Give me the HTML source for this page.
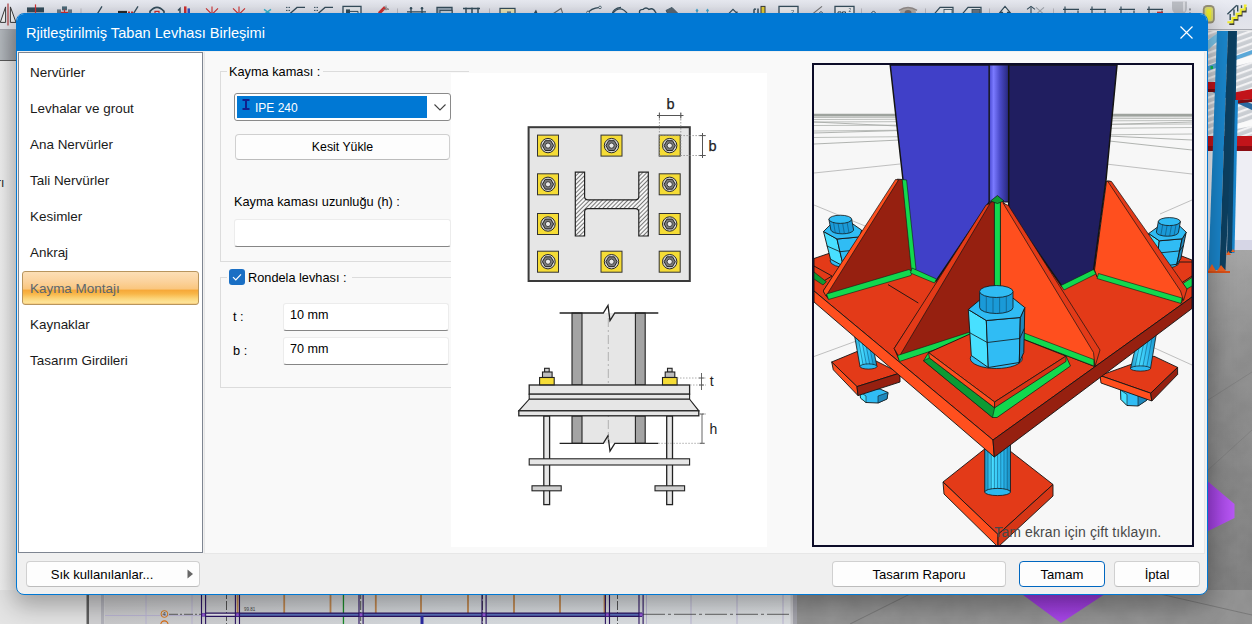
<!DOCTYPE html>
<html lang="tr">
<head>
<meta charset="utf-8">
<title>Rjitleştirilmiş Taban Levhası Birleşimi</title>
<style>
html,body{margin:0;padding:0;}
body{width:1252px;height:624px;overflow:hidden;position:relative;background:#f3f3f3;
  font-family:"Liberation Sans","DejaVu Sans",sans-serif;font-size:12px;color:#000;}
.abs{position:absolute;}
#bg{position:absolute;left:0;top:0;width:1252px;height:624px;}
#dlg{position:absolute;left:16px;top:13px;width:1192px;height:582px;box-sizing:border-box;
  border:1px solid #0078d4;border-radius:8px;background:#f0f0f0;overflow:hidden;
  box-shadow:0 8px 24px 3px rgba(0,0,0,.30);}
#title{position:absolute;left:0;top:0;width:100%;height:37px;background:#0078d4;color:#fff;}
#title span{position:absolute;left:9px;top:10px;font-size:14.6px;line-height:18px;white-space:nowrap;}
#list{position:absolute;left:1px;top:38px;width:185px;height:501px;box-sizing:border-box;background:#fff;border:1px solid #7e8591;}
.li{position:absolute;left:11px;font-size:13.45px;line-height:18px;white-space:nowrap;color:#1a1a1a;}
#sel{position:absolute;left:3px;top:218px;width:177px;height:34px;box-sizing:border-box;border:1px solid #b8955e;border-radius:3px;
  background:linear-gradient(#fcdfb6 0%,#fbd29c 30%,#fac67e 53%,#f6a838 57%,#f8b648 68%,#fcd67c 84%,#fde398 95%,#f6c878 100%);}
#panel{position:absolute;left:188px;top:38px;width:999px;height:502px;background:#f9f9f9;box-shadow:-1px 0 0 #e7e7e7, 1px 0 0 #e7e7e7, inset 0 -1px 0 #e7e7e7;}
.gb{position:absolute;box-sizing:border-box;border:1px solid #dcdcdc;}
.lbl{position:absolute;font-size:12.75px;line-height:16px;white-space:nowrap;background:#f9f9f9;}
.btn{position:absolute;box-sizing:border-box;border:1px solid #d0d0d0;border-bottom-color:#bcbcbc;border-radius:4px;background:#fdfdfd;
  font-size:12.3px;text-align:center;white-space:nowrap;}
.inp{position:absolute;box-sizing:border-box;border:1px solid #ececec;border-bottom:1px solid #868686;border-radius:3px;background:#fff;font-size:12.6px;}
</style>
</head>
<body>
<!--BG--><svg id="bg" width="1252" height="624" viewBox="0 0 1252 624" font-family="Liberation Sans, sans-serif">
<defs>
<linearGradient id="tb" x1="0" x2="0" y1="0" y2="1"><stop offset="0" stop-color="#eaecf3"/><stop offset="0.5" stop-color="#dfe1ea"/><stop offset="1" stop-color="#e4e5eb"/></linearGradient>
<linearGradient id="gband" x1="0" x2="1" y1="0" y2="0"><stop offset="0" stop-color="#b4b9be"/><stop offset="1" stop-color="#979ba1"/></linearGradient>
<linearGradient id="lft" x1="0" x2="1" y1="0" y2="0"><stop offset="0" stop-color="#f0f0f0"/><stop offset="1" stop-color="#e8e8e8"/></linearGradient>
<linearGradient id="cad" x1="0" x2="1" y1="0" y2="0"><stop offset="0" stop-color="#c9c9cb"/><stop offset="0.5" stop-color="#d6dade"/><stop offset="1" stop-color="#dcdfe2"/></linearGradient>
<linearGradient id="floor" x1="0" x2="0" y1="0" y2="1"><stop offset="0" stop-color="#a4a4a4"/><stop offset="0.25" stop-color="#8c8c8c"/><stop offset="0.6" stop-color="#828282"/><stop offset="1" stop-color="#7a7a7a"/></linearGradient>
<linearGradient id="pur" x1="0" x2="1" y1="0" y2="0"><stop offset="0" stop-color="#9636d6"/><stop offset="1" stop-color="#b858f4"/></linearGradient>
<linearGradient id="pur2" x1="0" x2="0" y1="0" y2="1"><stop offset="0" stop-color="#9636d6"/><stop offset="1" stop-color="#a848e8"/></linearGradient>
<filter id="noise" x="0" y="0" width="100%" height="100%"><feTurbulence type="fractalNoise" baseFrequency="0.045" numOctaves="3" seed="4"/><feColorMatrix type="matrix" values="0 0 0 0 0.45  0 0 0 0 0.45  0 0 0 0 0.45  0.9 0 0 -0.25 0"/></filter>
<pattern id="roof" width="6" height="6" patternUnits="userSpaceOnUse" patternTransform="rotate(-20)"><rect width="6" height="6" fill="#c9cdd2"/><rect width="6" height="2.2" fill="#f2f2f4"/></pattern>
</defs>
<rect width="1252" height="624" fill="#f3f3f3"/>
<rect x="0" y="0" width="1252" height="30" fill="url(#tb)"/>
<rect x="0" y="29" width="1252" height="1.2" fill="#a6a8b0"/>
<rect x="0" y="30" width="20" height="30" fill="url(#gband)"/><rect x="0" y="60" width="20" height="1" fill="#5a5a5a"/>
<rect x="0" y="61" width="20" height="540" fill="url(#lft)"/>
<text x="-3" y="187" font-size="12" fill="#222">rı</text>
<g transform="translate(0,1.4)" opacity="0.88"><path d="M0.3 21L5.6 5.5V21ZM16 21L10.4 5.5V21Z" fill="#f4f4f4" stroke="#222" stroke-width="1"/><path d="M8 2V24" stroke="#a01010" stroke-width="1.1"/>
<rect x="27" y="6" width="17" height="5" fill="#1e3a4a"/><path d="M35.5 3V14" stroke="#d01818" stroke-width="1.2"/><path d="M30 12.5H41" stroke="#666" stroke-width="1"/>
<rect x="57" y="8" width="4" height="4" fill="#5a7080"/><rect x="62" y="5" width="5" height="4" fill="#3a5a6a"/><rect x="68" y="8" width="4" height="4" fill="#5a7080"/><path d="M64.5 8V13M61 11H68" stroke="#d01818" stroke-width="1.2"/>
<path d="M81 7V20" stroke="#b8b8c0" stroke-width="1"/>
<path d="M90 12.5H108M97 13L102 5" stroke="#1e3a4a" stroke-width="1.3" fill="none"/>
<rect x="118" y="9.5" width="9" height="3" fill="#111"/><path d="M128 11H134" stroke="#d01818" stroke-width="2" stroke-dasharray="2 1"/><path d="M133 13L138 5" stroke="#1e3a4a" stroke-width="1.3"/>
<path d="M150 13V10Q157 2 164 10V13" stroke="#1e3a4a" stroke-width="1.6" fill="none"/><path d="M155 13V10H159V13" stroke="#d01818" stroke-width="1.2" fill="none"/>
<path d="M180 13V7L178 9" stroke="#1e3a4a" stroke-width="1.4" fill="none"/><rect x="184" y="5" width="2.5" height="8" fill="#d01818"/><rect x="187.5" y="7" width="2.5" height="6" fill="#2040c0"/>
<path d="M212 13V5M206 7L211 12M218 7L213 12" stroke="#d01818" stroke-width="1.1"/>
<path d="M239 13V5M233 7L238 12M245 7L240 12" stroke="#d01818" stroke-width="1.1"/>
<path d="M259 12.5H276" stroke="#1e3a4a" stroke-width="1.3"/><path d="M264 8L271 13M271 8L264 13" stroke="#20b0d0" stroke-width="1.3"/>
<path d="M286 6H291M286 9H290" stroke="#1e3a4a" stroke-width="1" stroke-dasharray="1.5 1"/><path d="M289 13L297 6H305" stroke="#1e3a4a" stroke-width="1.3" fill="none"/>
<path d="M314 6H319M314 9H318" stroke="#1e3a4a" stroke-width="1" stroke-dasharray="1.5 1"/><path d="M317 13L325 6H333" stroke="#1e3a4a" stroke-width="1.3" fill="none"/>
<rect x="343" y="5" width="18" height="10" fill="#e8ecf0" stroke="#1e3a4a" stroke-width="1.3"/><rect x="346" y="8" width="4" height="4" fill="#1e3a4a"/><path d="M350 10H358V13" stroke="#1e3a4a" stroke-width="1" fill="none"/>
<path d="M379 12L385 6" stroke="#d01818" stroke-width="3"/><path d="M384 5L389 8M386 4V9M383 8H389" stroke="#777" stroke-width="0.8"/>
<path d="M397.5 7V20" stroke="#b8b8c0" stroke-width="1"/>
<path d="M407 10.5H426M411 8V13M422 8V13" stroke="#1e3a4a" stroke-width="1.3"/><circle cx="411" cy="7" r="1.3" fill="#1e3a4a"/><circle cx="422" cy="7" r="1.3" fill="#1e3a4a"/>
<rect x="437" y="6" width="15" height="9" fill="#8ea0b0" stroke="#1e3a4a" stroke-width="1.3"/><rect x="440" y="9" width="12" height="6" fill="#c8d4dc" stroke="#1e3a4a" stroke-width="1"/>
<path d="M463 7H480M466 6V13M472 6V13M478 6V13" stroke="#1e3a4a" stroke-width="1.5"/>
<path d="M489.5 7V20" stroke="#b8b8c0" stroke-width="1"/>
<rect x="500" y="7" width="15" height="9" fill="#f0e8b0" stroke="#1e3a4a" stroke-width="1.2"/><rect x="507" y="10" width="4" height="4" fill="#5a7080"/>
<path d="M533 13L536 8L538 13Z" fill="#1e3a4a"/>
<path d="M552 13L561 7L563 13" stroke="#666" stroke-width="1.2" fill="none"/>
<path d="M588 12Q590 7 600 6" stroke="#1e3a4a" stroke-width="1.3" fill="none"/><circle cx="588" cy="11" r="1.3" fill="#fff" stroke="#1e3a4a" stroke-width="0.8"/><circle cx="600" cy="6" r="1.3" fill="#fff" stroke="#1e3a4a" stroke-width="0.8"/>
<path d="M612 13Q613 7 621 6" stroke="#1e3a4a" stroke-width="1.3" fill="none"/>
<path d="M612 13Q620 2 628 13" stroke="#1e3a4a" stroke-width="1.2" fill="none"/>
<path d="M640 13Q638 8 643 8Q646 5 649 8Q653 6 655 10Q657 12 655 13" stroke="#1e3a4a" stroke-width="1.4" fill="none"/>
<path d="M666 9L672 6L678 12L676 13H668Z" fill="#4a5a66" stroke="#1e3a4a" stroke-width="0.8"/>
<path d="M697 9V13M707.5 9V13" stroke="#1e3a4a" stroke-width="1" stroke-dasharray="1.2 1"/><path d="M695.5 9L697 7L698.5 9L697 11ZM706 9L707.5 7L709 9L707.5 11Z" fill="#30a0d0"/>
<path d="M728 13L733 8L738 13M737 10V13" stroke="#1e3a4a" stroke-width="1.2" fill="none"/>
<path d="M754 13V9Q754 7 756 8M758 13V7" stroke="#1e3a4a" stroke-width="1.5" fill="none"/><rect x="761" y="5" width="4" height="8" fill="#e8d020" stroke="#222" stroke-width="1"/>
<rect x="779" y="5" width="19" height="10" fill="#f2f2f4" stroke="#1e3a4a" stroke-width="1.3"/><text x="791" y="12.5" font-size="6" fill="#1e3a4a">2</text>
<path d="M812 13L822 5" stroke="#666" stroke-width="1.2"/><path d="M818 13L821 10L824 13" stroke="#1e3a4a" stroke-width="1" fill="none"/>
<rect x="835" y="5" width="19" height="10" fill="#f2f2f4" stroke="#1e3a4a" stroke-width="1.3"/><path d="M838 13V10.5H841V13M842.5 13V10.5H845.5V13" stroke="#1e3a4a" stroke-width="1" fill="none"/><text x="848.5" y="11" font-size="5" fill="#1e3a4a">2</text>
<path d="M861.5 7V20" stroke="#b8b8c0" stroke-width="1"/>
<path d="M870 13L873.5 9.5L877 13" stroke="#1e3a4a" stroke-width="1" fill="none"/><circle cx="888" cy="12.5" r="0.8" fill="#1e3a4a"/>
<ellipse cx="908" cy="11" rx="8" ry="5" fill="#b0a8a0"/><ellipse cx="908" cy="11.5" rx="3.5" ry="3" fill="#6a6260"/><path d="M899 9Q908 3 917 9" stroke="#8a8280" stroke-width="1.5" fill="none"/>
<path d="M925.5 7V20" stroke="#b8b8c0" stroke-width="1"/>
<path d="M934 13L940 6H953V13" fill="#e8ecf0" stroke="#1e3a4a" stroke-width="1.2"/><rect x="944" y="8" width="8" height="5" fill="#fafafa" stroke="#1e3a4a" stroke-width="0.8"/>
<path d="M962 13L968 6H981V13" fill="#e8ecf0" stroke="#1e3a4a" stroke-width="1.2"/><rect x="972" y="8" width="8" height="5" fill="#5a6a78" stroke="#1e3a4a" stroke-width="0.8"/>
<path d="M989.5 7V20" stroke="#b8b8c0" stroke-width="1"/>
<path d="M1000 11L1005 5L1010 11H1007.5V13H1002.5V11Z" fill="#f4f4f4" stroke="#1e3a4a" stroke-width="1.2"/>
<path d="M1031 13V6M1027 8L1031 5L1035 8" stroke="#1e3a4a" stroke-width="1.1" fill="none"/><path d="M1036 6L1044 13M1044 6L1036 13" stroke="#9aa0a8" stroke-width="1.1"/>
<path d="M1053.5 7V20" stroke="#b8b8c0" stroke-width="1"/>
<path d="M1063 8H1079M1065 5V13M1078 9V13" stroke="#1e3a4a" stroke-width="1.2" fill="none"/><path d="M1068 12H1075" stroke="#5a6a78" stroke-width="1" stroke-dasharray="1.5 1"/>
<path d="M1090 8H1106M1092 5V13M1105 9V13" stroke="#1e3a4a" stroke-width="1.2" fill="none"/><path d="M1095 12H1102" stroke="#5a6a78" stroke-width="1" stroke-dasharray="1.5 1"/>
<path d="M1119 8H1135M1121 5V13M1134 9V13" stroke="#1e3a4a" stroke-width="1.2" fill="none"/><path d="M1124 12H1131" stroke="#5a6a78" stroke-width="1" stroke-dasharray="1.5 1"/>
<path d="M1147 8H1163M1149 5V13M1162 9V13" stroke="#1e3a4a" stroke-width="1.2" fill="none"/><path d="M1152 12H1159" stroke="#5a6a78" stroke-width="1" stroke-dasharray="1.5 1"/>
<path d="M1157 11.5H1163" stroke="#d01818" stroke-width="2.5"/>
<path d="M1172 0H1187V6Q1187 10 1184 12H1175Q1172 10 1172 6Z" fill="#b9bcc2"/><path d="M1184 0V10" stroke="#e8e8ec" stroke-width="1.5"/>
<rect x="1189" y="7" width="2" height="2" fill="#8a8e96"/><rect x="1189" y="11" width="2" height="2" fill="#8a8e96"/>
<rect x="1202.8" y="3.6" width="12" height="18.6" rx="4.5" fill="#8a8468"/><rect x="1204.6" y="5.6" width="8.4" height="14.6" rx="2.5" fill="#d6d660"/><rect x="1206.4" y="7.5" width="4.8" height="11" rx="2" fill="#ecec14"/>
<path d="M1228.4 21.8H1232.5V17.6H1236.6V13.4H1240.7V9.2H1244.8V5" stroke="#2a2a20" stroke-width="1.8" fill="none" transform="translate(0.9,0.9)"/><path d="M1227.4 20.8H1232.5V16.6H1236.6V12.4H1240.7V8.2H1244.8V4.2H1246.6" stroke="#f2ee14" stroke-width="2" fill="none"/><path d="M1227.4 12.8L1236.8 3.8M1230.2 12.6V18.5M1234 8V14M1237.7 3.8V10M1241.5 3.8V6.5" stroke="#1e3a48" stroke-width="1.4" fill="none"/></g>
<g><rect x="1196" y="31" width="56" height="120" fill="url(#roof)"/><rect x="1196" y="150" width="56" height="92" fill="#eeeef4"/><rect x="1196" y="240" width="56" height="11" fill="#d6d6e6"/><rect x="1196" y="250" width="56" height="374" fill="url(#floor)"/><rect x="1196" y="250" width="56" height="374" filter="url(#noise)" opacity="0.3"/><path d="M1208 40L1218 33L1222 37L1208 50Z" fill="#7cc6ea"/><path d="M1208 66L1252 50V54L1208 71Z" fill="#5aa8d8"/><path d="M1208 84L1252 104V110L1208 90Z" fill="#2a6aa0"/><path d="M1236 60L1252 55V62L1236 66Z" fill="#fafafa"/><path d="M1236 124L1252 120V126L1236 129Z" fill="#fafafa"/><path d="M1208 82H1222V89H1208ZM1232 93L1252 89V99L1232 101Z" fill="#c2141a"/><path d="M1208 89H1222V92H1208ZM1232 101L1252 99V102L1232 104Z" fill="#7a0a10"/><path d="M1208 136H1252V149H1208Z" fill="#c2141a"/><path d="M1208 146H1252V151H1208Z" fill="#8a0c12"/><path d="M1231 31H1237L1233 253H1227Z" fill="#0c4468"/><path d="M1235 100H1238L1234.5 253H1232Z" fill="#1a86cc"/><path d="M1217 31H1228L1219.5 270H1208.5Z" fill="#1a86cc"/><path d="M1228 31H1236L1225.5 270H1219.5Z" fill="#0c3f60"/><path d="M1208 271L1212 264L1216 271ZM1217 271L1221 265L1226 271Z" fill="#f06020"/><path d="M1208 271H1230V273H1208Z" fill="#d85018"/><path d="M1226 255L1228.5 251L1231 255ZM1231 252L1233 249L1235 252Z" fill="#f06020"/><rect x="1210.5" y="66" width="2.5" height="3" fill="#10c050"/><path d="M1200 474.7L1234.5 504V518L1200 535Z" fill="url(#pur)"/><path d="M1208 400L1252 372M1208 470L1252 430" stroke="#666" stroke-width="0.6" opacity="0.5" fill="none"/></g>
<g><rect x="0" y="590" width="90" height="34" fill="#e4e4e4"/><rect x="86.5" y="590" width="2.5" height="34" fill="#5e5e5e"/><rect x="89" y="590" width="12" height="34" fill="#d0d0d2"/><rect x="101" y="590" width="3.5" height="34" fill="#b2b2ba"/><rect x="104.5" y="590" width="689" height="34" fill="url(#cad)"/><path d="M146 590V624M192 590V624M646.5 590V624M691 590V624M737 590V624M783 590V624M105 615.5H200" stroke="#b9b4d2" stroke-width="1" fill="none"/><path d="M169 614.3H201" stroke="#444" stroke-width="0.8" stroke-dasharray="9 2 2 2"/><path d="M643 614.3H789" stroke="#444" stroke-width="0.8" stroke-dasharray="22 3 3 3"/><path d="M226.5 590V624M360.7 590V624M482.5 590V624M617.5 590V624" stroke="#333" stroke-width="0.8" stroke-dasharray="9 2"/><rect x="236.7" y="590" width="1.8" height="23" fill="#c08850"/><rect x="283.3" y="590" width="1.8" height="23" fill="#c08850"/><rect x="329.6" y="590" width="1.8" height="23" fill="#c08850"/><rect x="374.90000000000003" y="590" width="1.8" height="23" fill="#c08850"/><rect x="420.1" y="590" width="1.8" height="23" fill="#c08850"/><rect x="467.1" y="590" width="1.8" height="23" fill="#c08850"/><rect x="513.1" y="590" width="1.8" height="23" fill="#c08850"/><rect x="559.1" y="590" width="1.8" height="23" fill="#c08850"/><rect x="603.6" y="590" width="1.8" height="23" fill="#c08850"/><rect x="342.8" y="590" width="1.3" height="34" fill="#1a8a2a"/><rect x="239.5" y="613" width="402" height="3.4" fill="#5a70ba"/><rect x="205" y="613" width="30" height="3.4" fill="#e8e8ee"/><path d="M205 613.2H642M205 616.4H642" stroke="#2a1262" stroke-width="1.2"/><path d="M201.5 595V624M205.6 595V624" stroke="#2a1262" stroke-width="1.1"/><path d="M235.4 595V624M239.5 595V624" stroke="#2a1262" stroke-width="1.1"/><path d="M359 595V624M363.1 595V624" stroke="#2a1262" stroke-width="1.1"/><path d="M482 595V624M486.1 595V624" stroke="#2a1262" stroke-width="1.1"/><path d="M605.4 595V624M609.5 595V624" stroke="#2a1262" stroke-width="1.1"/><path d="M639 595V624M643.1 595V624" stroke="#2a1262" stroke-width="1.1"/><rect x="420.5" y="616" width="3" height="8" fill="#2a2aa0"/><rect x="202.0" y="613.2" width="3" height="3" fill="#9a5ad8" stroke="#4a2a90" stroke-width="0.5"/><rect x="236.0" y="613.2" width="3" height="3" fill="#9a5ad8" stroke="#4a2a90" stroke-width="0.5"/><rect x="359.5" y="613.2" width="3" height="3" fill="#9a5ad8" stroke="#4a2a90" stroke-width="0.5"/><rect x="482.5" y="613.2" width="3" height="3" fill="#9a5ad8" stroke="#4a2a90" stroke-width="0.5"/><rect x="605.9" y="613.2" width="3" height="3" fill="#9a5ad8" stroke="#4a2a90" stroke-width="0.5"/><rect x="639.5" y="613.2" width="3" height="3" fill="#9a5ad8" stroke="#4a2a90" stroke-width="0.5"/><circle cx="164.4" cy="614" r="3.4" fill="none" stroke="#d8700a" stroke-width="0.9"/><text x="162.6" y="616.3" font-size="6" fill="#444">4</text><circle cx="164.4" cy="624.5" r="3.6" fill="none" stroke="#d86a10" stroke-width="1.1"/><text x="244" y="611" font-size="4.5" fill="#444">99.81</text><rect x="793" y="590" width="4" height="34" fill="#a4a4ac"/><rect x="790.5" y="590" width="2.5" height="34" fill="#c8c8cc"/><rect x="797" y="590" width="455" height="34" fill="#8e8e8e"/><rect x="797" y="590" width="455" height="34" filter="url(#noise)" opacity="0.35"/><path d="M850 624L910 594M1160 594L1252 615" stroke="#555" stroke-width="0.7" opacity="0.6" fill="none"/><path d="M1019 592H1108L1061 623Z" fill="url(#pur2)"/></g>
</svg><!--/BG-->

<div id="dlg">
  <div id="title"><span>Rjitleştirilmiş Taban Levhası Birleşimi</span>
    <svg class="abs" style="left:1163px;top:12px" width="13" height="13" viewBox="0 0 13 13"><path d="M0.5 0.5L12.5 12.5M12.5 0.5L0.5 12.5" stroke="#fff" stroke-width="1.2" fill="none"/></svg>
  </div>
  <div id="list">
    <div id="sel"></div>
    <div class="li" style="top:11px">Nervürler</div>
    <div class="li" style="top:47px">Levhalar ve grout</div>
    <div class="li" style="top:83px">Ana Nervürler</div>
    <div class="li" style="top:119px">Tali Nervürler</div>
    <div class="li" style="top:155px">Kesimler</div>
    <div class="li" style="top:191px">Ankraj</div>
    <div class="li" style="top:227px;color:#5a666e">Kayma Montajı</div>
    <div class="li" style="top:263px">Kaynaklar</div>
    <div class="li" style="top:299px">Tasarım Girdileri</div>
  </div>
  <div id="panel">
    <!-- groupbox 1 : x 220..,y 72..  panel origin = (205,52) -->
    <div class="gb" style="left:15px;top:19px;width:249px;height:191px;border-right:none"></div>
    <div class="lbl" style="left:22px;top:12px;padding:0 3px 0 2px">Kayma kaması :</div>
    <div class="abs" id="combo" style="left:29px;top:41px;width:217px;height:28px;box-sizing:border-box;border:1px solid #8a8a8a;border-radius:3px;background:#fff">
      <div class="abs" style="left:2px;top:2px;width:190px;height:22px;background:#0078d4"></div>
      <svg class="abs" style="left:7px;top:5px" width="8" height="12" viewBox="0 0 8 12"><path d="M0.5 1H7.5M0.5 10H7.5M4 1V10" stroke="#10208c" stroke-width="2" fill="none"/></svg>
      <div class="abs" style="left:20px;top:7px;font-size:12px;line-height:14px;color:#fff">IPE 240</div>
      <svg class="abs" style="left:198px;top:9px" width="14" height="9" viewBox="0 0 14 9"><path d="M1.5 1.5L7 7L12.5 1.5" stroke="#444" stroke-width="1.1" fill="none"/></svg>
    </div>
    <div class="btn" style="left:30px;top:82px;width:215px;height:26px;line-height:25.5px">Kesit Yükle</div>
    <div class="lbl" style="left:29px;top:142px;background:none">Kayma kaması uzunluğu (h) :</div>
    <div class="inp" style="left:29px;top:167px;width:217px;height:28px"></div>

    <div class="gb" style="left:15px;top:225px;width:260px;height:111px;border-right:none"></div>
    <div class="abs" style="left:22px;top:216px;width:125px;height:18px;background:#f9f9f9"></div>
    <div class="abs" style="left:24px;top:217px;width:16px;height:16px;box-sizing:border-box;border-radius:3px;background:#1a6fc4">
      <svg width="16" height="16" viewBox="0 0 16 16"><path d="M4 8.2L6.8 11L12 5.3" stroke="#fff" stroke-width="1.2" fill="none"/></svg>
    </div>
    <div class="lbl" style="left:43px;top:218px">Rondela levhası :</div>
    <div class="lbl" style="left:28px;top:257px;background:none">t :</div>
    <div class="inp" style="left:78px;top:251px;width:166px;height:28px"><span class="abs" style="left:6px;top:4px;line-height:14px">10 mm</span></div>
    <div class="lbl" style="left:28px;top:291px;background:none">b :</div>
    <div class="inp" style="left:78px;top:285px;width:166px;height:28px"><span class="abs" style="left:6px;top:4px;line-height:14px">70 mm</span></div>

    <div class="abs" id="img" style="left:246px;top:21px;width:316px;height:474px;background:#fff"><svg class="abs" style="left:0;top:0" width="316" height="474" viewBox="451 73 316 474" font-family="Liberation Sans, sans-serif">
<defs><pattern id="hat" width="3" height="3" patternUnits="userSpaceOnUse" patternTransform="rotate(45)"><rect width="3" height="3" fill="#f6f6f6"/><rect width="1" height="3" fill="#777"/></pattern></defs>
<!-- top view -->
<rect x="528.6" y="127.2" width="161.2" height="153.8" fill="#e6e6e6" stroke="#3a3a3a" stroke-width="2"/>
<path d="M575.3 172.2H584.6V196.5Q584.6 199.8 588 199.8H635.4Q638.8 199.8 638.8 196.5V172.2H648.3V236H638.8V212Q638.8 208.6 635.4 208.6H588Q584.6 208.6 584.6 212V236H575.3Z" fill="url(#hat)" stroke="#222" stroke-width="1.2"/>
<g transform="translate(548 145.6)"><rect x="-10.5" y="-10.5" width="21" height="21" fill="#f5dc36" stroke="#333" stroke-width="1"/><circle r="7.2" fill="#d4d4d4" stroke="#2a2a2a" stroke-width="1"/><path d="M-5.6 0L-2.8 -4.9L2.8 -4.9L5.6 0L2.8 4.9L-2.8 4.9Z" fill="#7c7c7c" stroke="#1a1a1a" stroke-width="0.9"/><circle r="2.6" fill="#e8e8e8" stroke="#222" stroke-width="0.8"/></g><g transform="translate(611.5 145.6)"><rect x="-10.5" y="-10.5" width="21" height="21" fill="#f5dc36" stroke="#333" stroke-width="1"/><circle r="7.2" fill="#d4d4d4" stroke="#2a2a2a" stroke-width="1"/><path d="M-5.6 0L-2.8 -4.9L2.8 -4.9L5.6 0L2.8 4.9L-2.8 4.9Z" fill="#7c7c7c" stroke="#1a1a1a" stroke-width="0.9"/><circle r="2.6" fill="#e8e8e8" stroke="#222" stroke-width="0.8"/></g><g transform="translate(669.7 145.6)"><rect x="-10.5" y="-10.5" width="21" height="21" fill="#f5dc36" stroke="#333" stroke-width="1"/><circle r="7.2" fill="#d4d4d4" stroke="#2a2a2a" stroke-width="1"/><path d="M-5.6 0L-2.8 -4.9L2.8 -4.9L5.6 0L2.8 4.9L-2.8 4.9Z" fill="#7c7c7c" stroke="#1a1a1a" stroke-width="0.9"/><circle r="2.6" fill="#e8e8e8" stroke="#222" stroke-width="0.8"/></g><g transform="translate(548 184.3)"><rect x="-10.5" y="-10.5" width="21" height="21" fill="#f5dc36" stroke="#333" stroke-width="1"/><circle r="7.2" fill="#d4d4d4" stroke="#2a2a2a" stroke-width="1"/><path d="M-5.6 0L-2.8 -4.9L2.8 -4.9L5.6 0L2.8 4.9L-2.8 4.9Z" fill="#7c7c7c" stroke="#1a1a1a" stroke-width="0.9"/><circle r="2.6" fill="#e8e8e8" stroke="#222" stroke-width="0.8"/></g><g transform="translate(669.7 184.3)"><rect x="-10.5" y="-10.5" width="21" height="21" fill="#f5dc36" stroke="#333" stroke-width="1"/><circle r="7.2" fill="#d4d4d4" stroke="#2a2a2a" stroke-width="1"/><path d="M-5.6 0L-2.8 -4.9L2.8 -4.9L5.6 0L2.8 4.9L-2.8 4.9Z" fill="#7c7c7c" stroke="#1a1a1a" stroke-width="0.9"/><circle r="2.6" fill="#e8e8e8" stroke="#222" stroke-width="0.8"/></g><g transform="translate(548 224)"><rect x="-10.5" y="-10.5" width="21" height="21" fill="#f5dc36" stroke="#333" stroke-width="1"/><circle r="7.2" fill="#d4d4d4" stroke="#2a2a2a" stroke-width="1"/><path d="M-5.6 0L-2.8 -4.9L2.8 -4.9L5.6 0L2.8 4.9L-2.8 4.9Z" fill="#7c7c7c" stroke="#1a1a1a" stroke-width="0.9"/><circle r="2.6" fill="#e8e8e8" stroke="#222" stroke-width="0.8"/></g><g transform="translate(669.7 224)"><rect x="-10.5" y="-10.5" width="21" height="21" fill="#f5dc36" stroke="#333" stroke-width="1"/><circle r="7.2" fill="#d4d4d4" stroke="#2a2a2a" stroke-width="1"/><path d="M-5.6 0L-2.8 -4.9L2.8 -4.9L5.6 0L2.8 4.9L-2.8 4.9Z" fill="#7c7c7c" stroke="#1a1a1a" stroke-width="0.9"/><circle r="2.6" fill="#e8e8e8" stroke="#222" stroke-width="0.8"/></g><g transform="translate(548 261.7)"><rect x="-10.5" y="-10.5" width="21" height="21" fill="#f5dc36" stroke="#333" stroke-width="1"/><circle r="7.2" fill="#d4d4d4" stroke="#2a2a2a" stroke-width="1"/><path d="M-5.6 0L-2.8 -4.9L2.8 -4.9L5.6 0L2.8 4.9L-2.8 4.9Z" fill="#7c7c7c" stroke="#1a1a1a" stroke-width="0.9"/><circle r="2.6" fill="#e8e8e8" stroke="#222" stroke-width="0.8"/></g><g transform="translate(611.5 261.7)"><rect x="-10.5" y="-10.5" width="21" height="21" fill="#f5dc36" stroke="#333" stroke-width="1"/><circle r="7.2" fill="#d4d4d4" stroke="#2a2a2a" stroke-width="1"/><path d="M-5.6 0L-2.8 -4.9L2.8 -4.9L5.6 0L2.8 4.9L-2.8 4.9Z" fill="#7c7c7c" stroke="#1a1a1a" stroke-width="0.9"/><circle r="2.6" fill="#e8e8e8" stroke="#222" stroke-width="0.8"/></g><g transform="translate(669.7 261.7)"><rect x="-10.5" y="-10.5" width="21" height="21" fill="#f5dc36" stroke="#333" stroke-width="1"/><circle r="7.2" fill="#d4d4d4" stroke="#2a2a2a" stroke-width="1"/><path d="M-5.6 0L-2.8 -4.9L2.8 -4.9L5.6 0L2.8 4.9L-2.8 4.9Z" fill="#7c7c7c" stroke="#1a1a1a" stroke-width="0.9"/><circle r="2.6" fill="#e8e8e8" stroke="#222" stroke-width="0.8"/></g>
<g stroke="#888" stroke-width="0.8" stroke-dasharray="1.5 1.5" fill="none"><path d="M659.4 113V156M680.8 113V156M659.4 135.6H706M659.4 155.5H706"/></g>
<g stroke="#555" stroke-width="1" fill="none"><path d="M657 115.5H683.5M659.4 112.5V118.5M680.8 112.5V118.5M702.5 133V158M699.5 135.6H705.5M699.5 155.5H705.5"/></g>
<text x="670.5" y="109" font-size="14.5" text-anchor="middle" fill="#222" stroke="#222" stroke-width="0.25">b</text>
<text x="712.5" y="150.5" font-size="14.5" text-anchor="middle" fill="#222" stroke="#222" stroke-width="0.25">b</text>
<!-- side view -->
<g stroke="#222" stroke-width="1.1">
<rect x="572" y="313" width="73" height="72" fill="#e6e6e6" stroke="none"/>
<rect x="572" y="416" width="73" height="27.3" fill="#e6e6e6" stroke="none"/>
<rect x="572" y="313" width="10" height="72" fill="#a4a4a4"/><rect x="635.4" y="313" width="9.8" height="72" fill="#a4a4a4"/>
<rect x="572" y="416" width="10" height="27.3" fill="#a4a4a4"/><rect x="635.4" y="416" width="9.8" height="27.3" fill="#a4a4a4"/>
<path d="M559.6 313H603.3L608 305.3L610 320.7L614.8 313H658.3M559.6 443.3H603.3L608 435.6L610 451L614.8 443.3H658.3" fill="none" stroke-width="1.3"/>
<path d="M608.3 318V440" stroke="#aaa" stroke-width="0.9" stroke-dasharray="9 3 2 3" fill="none"/>
<rect x="543.8" y="416" width="5.8" height="88.6" fill="#e6e6e6" stroke-width="1.3"/><rect x="666.7" y="416" width="5.8" height="88.6" fill="#e6e6e6" stroke-width="1.3"/>
<rect x="529.2" y="385" width="160.4" height="9.2" fill="#e6e6e6" stroke-width="1.3"/>
<rect x="529.2" y="394.2" width="160.4" height="5" fill="#e6e6e6"/>
<path d="M529.2 399.2H689.6L698.8 410.8H518.8Z" fill="#e6e6e6"/>
<rect x="518.8" y="410.8" width="180" height="5" fill="#e6e6e6" stroke-width="1.3"/>
<rect x="529.2" y="458.8" width="160.4" height="6.2" fill="#e6e6e6"/>
<rect x="532" y="485.8" width="29.2" height="5" fill="#cfcfcf"/><rect x="655" y="485.8" width="29.6" height="5" fill="#cfcfcf"/>
<rect x="544.6" y="368.3" width="4.6" height="4" fill="#cfcfcf"/><rect x="542.5" y="372" width="9.6" height="5.5" fill="#bdbdbd"/><rect x="539.6" y="377.5" width="14.6" height="7.3" fill="#f5dc36"/>
<rect x="667.5" y="368.3" width="4.6" height="4" fill="#cfcfcf"/><rect x="665.2" y="372" width="9.6" height="5.5" fill="#bdbdbd"/><rect x="662.5" y="377.5" width="14.6" height="7.3" fill="#f5dc36"/>
</g>
<g stroke="#999" stroke-width="0.8" stroke-dasharray="1.5 1.5" fill="none"><path d="M677 378H706M690 385H706M699 414H706M658.3 443.3H706"/></g>
<g stroke="#555" stroke-width="0.9" fill="none"><path d="M701.5 373V390M699 378H704M699 385H704M702 414V443.3M699.5 414H704.5M699.5 443.3H704.5"/></g>
<text x="711.7" y="385.5" font-size="14" text-anchor="middle" fill="#222">t</text>
<text x="713.5" y="433.5" font-size="14" text-anchor="middle" fill="#222">h</text>
</svg></div>
    <div class="abs" id="view" style="left:607px;top:11px;width:382px;height:484px;box-sizing:border-box;border:2px solid #0c0c28;background:#f6f6f6;overflow:hidden"><!--VIEW--><svg class="abs" style="left:0;top:0" width="378" height="480" viewBox="814 65 378 480" font-family="Liberation Sans, sans-serif" stroke-linejoin="round">
<defs>
<linearGradient id="fil" x1="0" x2="1" y1="0" y2="0"><stop offset="0" stop-color="#4848d0"/><stop offset="0.22" stop-color="#7a7aff"/><stop offset="0.55" stop-color="#4a4ac8"/><stop offset="1" stop-color="#26267a"/></linearGradient>
<linearGradient id="rod" x1="0" x2="1" y1="0" y2="0"><stop offset="0" stop-color="#1a8ec0"/><stop offset="0.3" stop-color="#48dcff"/><stop offset="0.7" stop-color="#2cb8ee"/><stop offset="1" stop-color="#1a8ec0"/></linearGradient>
</defs>
<rect x="814" y="65" width="378" height="480" fill="#f7f7f7"/>
<!-- floor grid -->
<g stroke="#a8aca8" stroke-width="0.9" fill="none">
<path d="M814 114.5H1192M814 115.8H1192" stroke="#9ea39e" stroke-width="1.4"/>
<path d="M814 117.5L1192 116.8M814 119.5L1192 118.4M814 122L1192 120.5M814 125.5L1192 124M814 131L1192 127.5M814 137.5L1192 134" stroke="#b4b8b4"/>
<path d="M814 122L1192 140M1192 122L814 133M814 144L900 140M1100 140L1192 150"/>
<path d="M814 173L900 164M1106 164L1192 174M814 205L870 228M1192 200L1160 214M814 356.5L855 341.5M1192 365L1142.8 342.7" stroke="#b8b8b8"/>
</g>
<polygon points="860.0,392.0 868.0,388.5 880.0,389.0 888.0,392.5 887.0,399.0 878.0,403.0 866.0,402.5 860.5,398.0" fill="#30bcf4" stroke="#141414" stroke-width="0.9" />
<polygon points="860.0,392.0 866.0,396.0 866.0,402.5 860.5,398.0" fill="#48e0ff" stroke="#141414" stroke-width="0.6" />
<polygon points="878.0,396.0 888.0,392.5 887.0,399.0 878.0,403.0" fill="#1f88bc" stroke="#141414" stroke-width="0.6" />
<polygon points="831.7,362.0 857.0,351.5 900.0,373.0 857.0,386.6" fill="#e33a18" stroke="#141414" stroke-width="0.9" />
<polygon points="831.7,362.0 857.0,386.6 858.0,395.6 833.3,369.8" fill="#ff4f1e" stroke="#141414" stroke-width="0.9" />
<polygon points="857.0,386.6 900.0,373.0 900.0,382.0 858.0,395.6" fill="#962010" stroke="#141414" stroke-width="0.9" />
<polygon points="853.5,330 869.5,330 877,366.5 860,366.5" fill="url(#rod)" stroke="#141414" stroke-width="0.8"/>
<line x1="856.7" y1="330" x2="863.4" y2="366.5" stroke="#0e5a80" stroke-width="0.6"/>
<line x1="859.9" y1="330" x2="866.8" y2="366.5" stroke="#0e5a80" stroke-width="0.6"/>
<line x1="863.1" y1="330" x2="870.2" y2="366.5" stroke="#0e5a80" stroke-width="0.6"/>
<line x1="866.3" y1="330" x2="873.6" y2="366.5" stroke="#0e5a80" stroke-width="0.6"/>
<ellipse cx="868.5" cy="366.5" rx="8.5" ry="2.6" fill="#2cb8ee" stroke="#141414" stroke-width="0.7"/>
<polygon points="1120.5,390.0 1128.0,386.5 1140.0,387.0 1147.5,391.0 1147.0,400.0 1138.0,406.0 1127.0,405.5 1121.0,399.5" fill="#30bcf4" stroke="#141414" stroke-width="0.9" />
<polygon points="1120.5,390.0 1127.0,394.5 1127.0,405.5 1121.0,399.5" fill="#48e0ff" stroke="#141414" stroke-width="0.6" />
<polygon points="1138.0,395.0 1147.5,391.0 1147.0,400.0 1138.0,406.0" fill="#1f88bc" stroke="#141414" stroke-width="0.6" />
<polygon points="1100.0,375.5 1154.0,356.2 1177.6,367.4 1150.7,393.2" fill="#e33a18" stroke="#141414" stroke-width="0.9" />
<polygon points="1100.0,375.5 1150.7,393.2 1151.8,401.0 1101.0,383.0" fill="#ff4f1e" stroke="#141414" stroke-width="0.9" />
<polygon points="1150.7,393.2 1177.6,367.4 1177.6,374.5 1151.8,401.0" fill="#962010" stroke="#141414" stroke-width="0.9" />
<polygon points="1139.5,330 1157,330 1150.5,368.5 1130.5,368.5" fill="url(#rod)" stroke="#141414" stroke-width="0.8"/>
<line x1="1143.0" y1="330" x2="1134.5" y2="368.5" stroke="#0e5a80" stroke-width="0.6"/>
<line x1="1146.5" y1="330" x2="1138.5" y2="368.5" stroke="#0e5a80" stroke-width="0.6"/>
<line x1="1150.0" y1="330" x2="1142.5" y2="368.5" stroke="#0e5a80" stroke-width="0.6"/>
<line x1="1153.5" y1="330" x2="1146.5" y2="368.5" stroke="#0e5a80" stroke-width="0.6"/>
<ellipse cx="1140.5" cy="368.5" rx="10.0" ry="2.6" fill="#2cb8ee" stroke="#141414" stroke-width="0.7"/>
<polygon points="943.0,482.0 996.0,440.0 1053.0,484.5 998.0,534.5" fill="#e33a18" stroke="#141414" stroke-width="0.9" />
<polygon points="943.0,482.0 998.0,534.5 998.0,547.0 944.0,494.0" fill="#ff4f1e" stroke="#141414" stroke-width="0.9" />
<polygon points="998.0,534.5 1053.0,484.5 1053.0,496.0 998.0,547.0" fill="#d63616" stroke="#141414" stroke-width="0.9" />
<polygon points="984.7,440 1010.5,440 1010.5,492 984.7,492" fill="url(#rod)" stroke="#141414" stroke-width="0.8"/>
<line x1="987.9" y1="440" x2="987.9" y2="492" stroke="#0e5a80" stroke-width="0.6"/>
<line x1="991.2" y1="440" x2="991.2" y2="492" stroke="#0e5a80" stroke-width="0.6"/>
<line x1="994.4" y1="440" x2="994.4" y2="492" stroke="#0e5a80" stroke-width="0.6"/>
<line x1="997.6" y1="440" x2="997.6" y2="492" stroke="#0e5a80" stroke-width="0.6"/>
<line x1="1000.8" y1="440" x2="1000.8" y2="492" stroke="#0e5a80" stroke-width="0.6"/>
<line x1="1004.0" y1="440" x2="1004.0" y2="492" stroke="#0e5a80" stroke-width="0.6"/>
<line x1="1007.3" y1="440" x2="1007.3" y2="492" stroke="#0e5a80" stroke-width="0.6"/>
<ellipse cx="997.6" cy="492" rx="12.9" ry="3.6" fill="#2cb8ee" stroke="#141414" stroke-width="0.8"/>
<polygon points="814.0,258.5 880.0,236.0 1130.0,236.0 1192.0,260.0 1192.0,297.0 993.0,440.0 814.0,291.0" fill="#e33a18" stroke="#141414" stroke-width="0.9" />
<polygon points="814.0,291.0 993.0,440.0 994.3,457.0 814.0,302.0" fill="#ff4f1e" stroke="#141414" stroke-width="0.9" />
<polygon points="993.0,440.0 1192.0,297.0 1192.0,308.5 994.3,457.0" fill="#962010" stroke="#141414" stroke-width="0.9" />
<polyline points="888.0,284.6 918.3,303.0" fill="none" stroke="#141414" stroke-width="0.9"/>
<polygon points="890.2,65.0 989.3,65.0 989.3,202.0 936.0,281.0 912.5,270.0 903.0,180.0" fill="#4040c8" stroke="#141414" stroke-width="1.5" />
<rect x="989.3" y="65" width="19.4" height="137" fill="url(#fil)" stroke="#141414" stroke-width="1"/>
<polygon points="1008.7,65.0 1117.0,65.0 1106.0,180.0 1093.5,270.5 1062.0,286.5 1008.7,210.0" fill="#201e60" stroke="#141414" stroke-width="1.5" />
<polygon points="814.0,266.0 832.0,276.0 822.0,282.0 814.0,278.0" fill="#e33a18" stroke="#141414" stroke-width="0.9" />
<polygon points="814.0,272.0 826.4,281.7 823.0,285.0 814.0,279.0" fill="#0d9a34" stroke="#141414" stroke-width="0.6" />
<ellipse cx="847.8" cy="260.9" rx="17.7" ry="6.8" fill="#30bcf4" stroke="#141414" stroke-width="0.8"/>
<polygon points="823.5,231.5 837.0,239.0 843.3,266.1 830.5,259.2" fill="#48e0ff" stroke="#141414" stroke-width="0.9" />
<polygon points="837.0,239.0 859.8,236.9 863.9,263.3 843.3,266.1" fill="#30bcf4" stroke="#141414" stroke-width="0.9" />
<polygon points="859.8,236.9 861.6,230.1 865.9,257.5 863.9,263.3" fill="#1f88bc" stroke="#141414" stroke-width="0.9" />
<polyline points="826.7,245.9 840.0,251.7 861.7,249.4 863.7,243.6" fill="none" stroke="#141414" stroke-width="0.8"/>
<polygon points="823.5,231.5 830.4,224.7 851.9,223.3 861.6,230.1 859.8,236.9 837.0,239.0" fill="#30bcf4" stroke="#141414" stroke-width="0.9" />
<path d="M828.9 219.3L830.9 230.1A11.4 4.1 0 0 0 853.6 230.1L851.7 219.3Z" fill="#1a9ad8" stroke="#141414" stroke-width="0.8"/>
<line x1="833.5" y1="222.5" x2="835.4" y2="233.4" stroke="#0e5a80" stroke-width="0.7"/>
<line x1="838.0" y1="223.3" x2="840.0" y2="234.1" stroke="#0e5a80" stroke-width="0.7"/>
<line x1="842.6" y1="223.3" x2="844.5" y2="234.1" stroke="#0e5a80" stroke-width="0.7"/>
<line x1="847.1" y1="222.5" x2="849.1" y2="233.4" stroke="#0e5a80" stroke-width="0.7"/>
<ellipse cx="840.3" cy="219.3" rx="11.4" ry="4.1" fill="#30bcf4" stroke="#141414" stroke-width="0.8"/>
<polygon points="1160.0,262.0 1192.0,262.0 1192.0,276.0 1180.0,284.0" fill="#e33a18" stroke="#141414" stroke-width="0.9" />
<polygon points="1183.0,283.5 1192.0,277.5 1192.0,286.0 1186.0,289.5" fill="#12d84e" stroke="#141414" stroke-width="0.6" />
<ellipse cx="1162.1" cy="262.1" rx="17.2" ry="6.6" fill="#30bcf4" stroke="#141414" stroke-width="0.8"/>
<polygon points="1148.7,233.5 1159.3,240.8 1155.9,267.1 1145.9,260.4" fill="#48e0ff" stroke="#141414" stroke-width="0.9" />
<polygon points="1159.3,240.8 1182.1,238.8 1176.8,264.3 1155.9,267.1" fill="#30bcf4" stroke="#141414" stroke-width="0.9" />
<polygon points="1182.1,238.8 1186.2,232.2 1180.8,258.7 1176.8,264.3" fill="#1f88bc" stroke="#141414" stroke-width="0.9" />
<polyline points="1146.9,247.5 1157.7,253.1 1179.6,250.9 1183.6,245.2" fill="none" stroke="#141414" stroke-width="0.8"/>
<polygon points="1148.7,233.5 1157.8,226.9 1179.2,225.6 1186.2,232.2 1182.1,238.8 1159.3,240.8" fill="#30bcf4" stroke="#141414" stroke-width="0.9" />
<path d="M1158.3 221.6L1156.4 232.2A11.0 4.0 0 0 0 1178.5 232.2L1180.4 221.6Z" fill="#1a9ad8" stroke="#141414" stroke-width="0.8"/>
<line x1="1162.7" y1="224.8" x2="1160.8" y2="235.3" stroke="#0e5a80" stroke-width="0.7"/>
<line x1="1167.1" y1="225.5" x2="1165.2" y2="236.1" stroke="#0e5a80" stroke-width="0.7"/>
<line x1="1171.5" y1="225.5" x2="1169.6" y2="236.1" stroke="#0e5a80" stroke-width="0.7"/>
<line x1="1176.0" y1="224.8" x2="1174.1" y2="235.3" stroke="#0e5a80" stroke-width="0.7"/>
<ellipse cx="1169.3" cy="221.6" rx="11.0" ry="4.0" fill="#30bcf4" stroke="#141414" stroke-width="0.8"/>
<polygon points="897.2,179.2 903.0,179.5 912.5,270.0 910.0,274.0 828.0,298.5 823.2,291.0" fill="#962010" stroke="#141414" stroke-width="0.9" />
<polygon points="895.5,179.5 898.5,180.0 826.0,296.0 823.2,291.0" fill="#ff4f1e" stroke="#141414" stroke-width="0.7" />
<polygon points="826.5,294.0 909.0,269.5 912.5,272.0 911.0,275.5 828.5,299.5" fill="#12d84e" stroke="#141414" stroke-width="0.6" />
<polygon points="902.2,179.5 906.6,180.0 916.0,269.0 911.5,271.5" fill="#12d84e" stroke="#141414" stroke-width="0.6" />
<polygon points="912.0,268.0 936.5,279.0 934.5,283.0 910.5,273.0" fill="#12d84e" stroke="#141414" stroke-width="0.6" />
<polygon points="1106.5,181.0 1110.5,181.3 1185.5,290.0 1181.5,303.0 1097.0,277.0 1094.5,270.0" fill="#ff4f1e" stroke="#141414" stroke-width="0.9" />
<polygon points="1107.5,181.0 1111.5,181.5 1187.0,289.0 1183.5,300.5 1180.5,291.0" fill="#e33a18" stroke="#141414" stroke-width="0.7" />
<polygon points="1098.5,273.5 1182.0,298.0 1181.0,303.5 1097.0,278.5" fill="#12d84e" stroke="#141414" stroke-width="0.6" />
<polygon points="1093.5,269.5 1096.0,274.0 1064.0,290.0 1061.0,285.5" fill="#12d84e" stroke="#141414" stroke-width="0.6" />
<polygon points="988.4,204.0 994.5,200.0 994.5,330.0 899.5,360.5 894.2,348.5" fill="#962010" stroke="#141414" stroke-width="0.9" />
<polygon points="986.0,205.0 990.0,203.5 899.0,357.0 894.2,348.5" fill="#e33a18" stroke="#141414" stroke-width="0.7" />
<polygon points="897.5,355.5 994.5,324.0 994.5,330.0 899.5,361.5" fill="#12d84e" stroke="#141414" stroke-width="0.6" />
<polygon points="1000.4,200.0 1005.0,204.0 1097.0,351.0 1094.5,366.5 1000.4,330.0" fill="#ff4f1e" stroke="#141414" stroke-width="0.9" />
<polygon points="1003.0,203.0 1008.5,205.5 1100.0,350.0 1095.0,366.5 1093.5,352.5" fill="#e33a18" stroke="#141414" stroke-width="0.7" />
<polygon points="1000.4,324.0 1093.8,359.5 1094.0,366.0 1000.4,330.5" fill="#12d84e" stroke="#141414" stroke-width="0.6" />
<polygon points="994.4,201.0 997.4,196.5 1000.4,201.0 1000.4,330.0 994.4,330.0" fill="#12d84e" stroke="#141414" stroke-width="0.7" />
<polygon points="990.5,201.0 997.4,195.5 1004.0,201.0 997.4,203.5" fill="#0d9a34" stroke="#141414" stroke-width="0.7" />
<polygon points="923.5,360.8 992.5,417.5 997.0,417.5 1070.5,366.0 1066.0,356.0 994.5,337.0 928.5,352.6" fill="#12d84e" stroke="#141414" stroke-width="0.7" />
<polygon points="923.5,360.8 992.5,417.5 994.6,407.8 929.4,357.9" fill="#0d9a34" stroke="#141414" stroke-width="0.6" />
<polygon points="928.5,352.6 970.0,334.0 1010.0,334.0 1066.0,356.1 994.6,402.0" fill="#e33a18" stroke="#141414" stroke-width="0.9" />
<polygon points="928.5,352.6 994.6,402.0 994.6,407.8 929.4,357.9" fill="#ff4f1e" stroke="#141414" stroke-width="0.7" />
<polygon points="994.6,402.0 1066.0,356.1 1066.0,361.4 994.6,407.8" fill="#d83416" stroke="#141414" stroke-width="0.7" />
<ellipse cx="996.3" cy="358.5" rx="26.0" ry="10.0" fill="#30bcf4" stroke="#141414" stroke-width="0.8"/>
<polygon points="968.3,309.5 986.3,320.5 988.3,367.5 971.3,355.5" fill="#48e0ff" stroke="#141414" stroke-width="0.9" />
<polygon points="986.3,320.5 1020.3,317.5 1019.3,362.5 988.3,367.5" fill="#30bcf4" stroke="#141414" stroke-width="0.9" />
<polygon points="1020.3,317.5 1024.8,307.5 1023.8,352.5 1019.3,362.5" fill="#1f88bc" stroke="#141414" stroke-width="0.9" />
<polyline points="969.3,332.5 987.3,342.5 1019.8,338.5 1024.3,328.5" fill="none" stroke="#141414" stroke-width="0.8"/>
<polygon points="968.3,309.5 980.3,299.5 1012.3,297.5 1024.8,307.5 1020.3,317.5 986.3,320.5" fill="#30bcf4" stroke="#141414" stroke-width="0.9" />
<path d="M979.6 291.5L979.6 307.5A16.7 6.0 0 0 0 1013.0 307.5L1013.0 291.5Z" fill="#1a9ad8" stroke="#141414" stroke-width="0.8"/>
<line x1="986.3" y1="296.3" x2="986.3" y2="312.3" stroke="#0e5a80" stroke-width="0.7"/>
<line x1="993.0" y1="297.4" x2="993.0" y2="313.4" stroke="#0e5a80" stroke-width="0.7"/>
<line x1="999.6" y1="297.4" x2="999.6" y2="313.4" stroke="#0e5a80" stroke-width="0.7"/>
<line x1="1006.3" y1="296.3" x2="1006.3" y2="312.3" stroke="#0e5a80" stroke-width="0.7"/>
<ellipse cx="996.3" cy="291.5" rx="16.7" ry="6.0" fill="#30bcf4" stroke="#141414" stroke-width="0.8"/>
<text x="994.3" y="536.5" font-size="14" fill="#484848" letter-spacing="0.1">Tam ekran için çift tıklayın.</text>
</svg><!--/VIEW--></div>
  </div>
  <div class="btn" style="left:9px;top:547px;width:174px;height:26px;line-height:25.5px;padding-right:22px;font-size:13.1px">Sık kullanılanlar...
    <svg class="abs" style="left:160px;top:7px" width="7" height="10" viewBox="0 0 7 10"><path d="M0.5 0.5L6 5L0.5 9.5Z" fill="#666"/></svg>
  </div>
  <div class="btn" style="left:815px;top:547px;width:174px;height:26px;line-height:25.5px;font-size:13.1px">Tasarım Raporu</div>
  <div class="btn" style="left:1002px;top:547px;width:86px;height:26px;line-height:25.5px;border-color:#0067c0;font-size:13.1px">Tamam</div>
  <div class="btn" style="left:1097px;top:547px;width:86px;height:26px;line-height:25.5px;font-size:13.1px">İptal</div>
</div>
</body>
</html>
